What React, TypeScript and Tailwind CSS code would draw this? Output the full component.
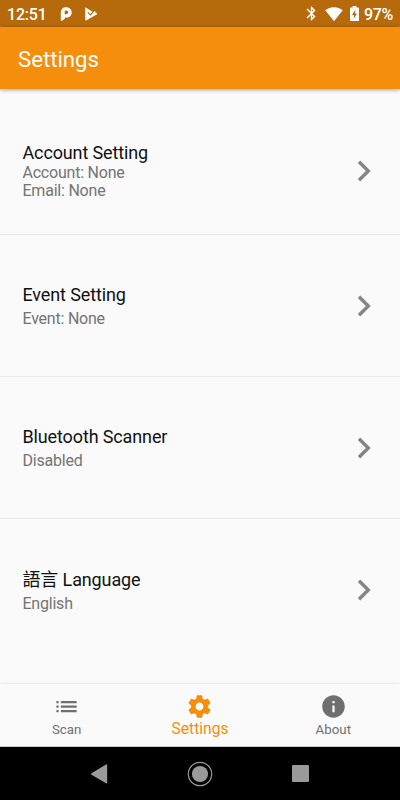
import React from 'react';

type IconProps = { d: string; className: string };

function Icon({ d, className }: IconProps) {
  return (
    <svg viewBox="0 0 24 24" fill="currentColor" className={className} aria-hidden="true">
      <path d={d} />
    </svg>
  );
}

const paths = {
  bluetooth:
    'M17.71 7.71L12 2h-1v7.59L6.41 5 5 6.41 10.59 12 5 17.59 6.41 19 11 14.41V22h1l5.71-5.71-4.3-4.29 4.3-4.29zM13 5.83l1.88 1.88L13 9.59V5.83zm1.88 10.46L13 18.17v-3.76l1.88 1.88z',
  wifi: 'M12 21.5L23.6 7C23.2 6.6 18.7 3 12 3S.8 6.6.4 7L12 21.5z',
  list: 'M3 13h2v-2H3v2zm0 4h2v-2H3v2zm0-8h2V7H3v2zm4 4h14v-2H7v2zm0 4h14v-2H7v2zM7 7v2h14V7H7z',
  settings:
    'M19.43 12.98c.04-.32.07-.64.07-.98s-.03-.66-.07-.98l2.11-1.65c.19-.15.24-.42.12-.64l-2-3.46c-.12-.22-.39-.3-.61-.22l-2.49 1c-.52-.4-1.08-.73-1.69-.98l-.38-2.65C14.46 2.18 14.25 2 14 2h-4c-.25 0-.46.18-.49.42l-.38 2.65c-.61.25-1.17.59-1.69.98l-2.49-1c-.23-.09-.49 0-.61.22l-2 3.46c-.13.22-.07.49.12.64l2.11 1.65c-.04.32-.07.65-.07.98s.03.66.07.98l-2.11 1.65c-.19.15-.24.42-.12.64l2 3.46c.12.22.39.3.61.22l2.49-1c.52.4 1.08.73 1.69.98l.38 2.65c.03.24.24.42.49.42h4c.25 0 .46-.18.49-.42l.38-2.65c.61-.25 1.17-.59 1.69-.98l2.49 1c.23.09.49 0 .61-.22l2-3.46c.12-.22.07-.49-.12-.64l-2.11-1.65zM12 15.5c-1.93 0-3.5-1.57-3.5-3.5s1.57-3.5 3.5-3.5 3.5 1.57 3.5 3.5-1.57 3.5-3.5 3.5z',
  info: 'M12 2C6.48 2 2 6.48 2 12s4.48 10 10 10 10-4.48 10-10S17.52 2 12 2zm1 15h-2v-6h2v6zm0-8h-2V7h2v2z',
};

function StatusBar() {
  return (
    <div className="flex h-[27px] shrink-0 items-center bg-[#b66a0b] px-[7px] text-white">
      <span className="w-[40px] whitespace-nowrap pt-[2px] text-[16px] font-medium leading-none tracking-[-0.2px]">
        12:51
      </span>
      <svg viewBox="0 0 12 14" className="ml-[13px] h-[14px] w-3" aria-hidden="true">
        <path
          fill="white"
          fillRule="evenodd"
          d="M.8 5.6C.8 2.2 2.9.2 6.1.2S11.7 2.4 11.7 5.4 9.5 10.5 6.7 10.5H5.1C4.8 12.4 3.2 13.7.8 13.7zM6.3 3.4C5.3 3.4 4.7 4.1 4.7 5.1V7.3H6.1C7.4 7.3 8.2 6.5 8.2 5.3S7.4 3.4 6.3 3.4z"
        />
      </svg>
      <svg viewBox="0 0 14 14" className="ml-[12px] h-[14px] w-[14px]" aria-hidden="true">
        <path
          fill="white"
          d="M1.200.6Q1.200.2 1.700.5L7 3.700 9.200 4.900 10.800 3.100 11.400 5.600 13 6.300Q13.500 6.700 13 7.200L2.500 13.200Q1.200 13.800 1.200 12.400z"
        />
        <path d="M3.800 5.400 6.400 7.900 10.800 3.200" fill="none" stroke="#b66a0b" strokeWidth="1.1" />
      </svg>
      <Icon d={paths.bluetooth} className="ml-auto h-[17px] w-[17px]" />
      <Icon d={paths.wifi} className="ml-[5px] mt-px h-[18px] w-[18px]" />
      <svg viewBox="0 0 9 15" className="ml-[7px] mr-[5px] h-[15px] w-[9px]" aria-hidden="true">
        <path
          fill="white"
          fillRule="evenodd"
          d="M2.600 0H6.400V1.500H8.200Q9 1.500 9 2.300V14.200Q9 15 8.200 15H.8Q0 15 0 14.200V2.300Q0 1.500.8 1.500H2.600zM5.400 3.800 2 9H4L3.600 12.700 7 7.500H5z"
        />
      </svg>
      <span className="w-[29px] whitespace-nowrap pt-[2px] text-[16px] font-medium leading-none tracking-[-0.3px]">
        97%
      </span>
    </div>
  );
}

type RowProps = { title: string; lines: string[]; tall?: boolean; last?: boolean };

function SettingRow({ title, lines, tall, last }: RowProps) {
  return (
    <div
      className={`flex shrink-0 items-center justify-between pl-[22.5px] pr-[29px] ${
        tall ? 'h-[146px] pt-[18px]' : 'h-[142px]'
      } ${last ? '' : 'border-b border-[#e9e9e9]'}`}
    >
      <div className={tall ? '' : 'pt-[3px]'}>
        <div className="text-[18px] leading-[22px] tracking-[-0.13px] text-[#111]">{title}</div>
        <div className={tall ? '' : 'mt-[2px] pb-[1px]'}>
          {lines.map((line) => (
            <div
              key={line}
              className={`text-[16px] tracking-[-0.22px] text-[#747474] ${
                tall ? 'leading-[17.5px]' : 'leading-[21px]'
              }`}
            >
              {line}
            </div>
          ))}
        </div>
      </div>
      <svg viewBox="0 0 14 22" className="h-[22px] w-[14px] text-[#858585]" aria-hidden="true">
        <path d="M2 1.7 11.3 11 2 20.3" fill="none" stroke="currentColor" strokeWidth="3.4" />
      </svg>
    </div>
  );
}

export default function App() {
  return (
    <div className="flex h-[800px] w-[400px] flex-col overflow-hidden bg-[#fafafa] font-['Roboto','Noto_Sans_CJK_TC',sans-serif]">
      <StatusBar />
      <header className="z-10 flex h-[62px] shrink-0 items-center bg-[#f58e0c] pl-[18px] pt-[2px] text-[22.2px] leading-none text-white shadow-[0_1px_4px_rgba(0,0,0,0.35)]">
        <h1>Settings</h1>
      </header>
      <main className="flex flex-1 flex-col">
        <SettingRow title="Account Setting" lines={['Account: None', 'Email: None']} tall />
        <SettingRow title="Event Setting" lines={['Event: None']} />
        <SettingRow title="Bluetooth Scanner" lines={['Disabled']} />
        <SettingRow title="語言 Language" lines={['English']} last />
      </main>
      <nav className="grid h-[63px] shrink-0 grid-cols-3 border-b border-[#c8c8c8] bg-[#fafafa] text-[#6f6f6f] shadow-[0_-1px_2px_rgba(0,0,0,0.07)]">
        <div className="flex flex-col items-center pt-[9px]">
          <Icon d={paths.list} className="h-[27px] w-[27px]" />
          <span className="mt-[1px] text-[13.3px] leading-[17px]">Scan</span>
        </div>
        <div className="flex flex-col items-center pt-[9px] text-[#f58e0c]">
          <Icon d={paths.settings} className="h-[27px] w-[27px]" />
          <span className="text-[15.6px] leading-[18px]">Settings</span>
        </div>
        <div className="flex flex-col items-center pt-[9px]">
          <Icon d={paths.info} className="h-[27px] w-[27px]" />
          <span className="mt-[1px] text-[13.3px] leading-[17px]">About</span>
        </div>
      </nav>
      <div className="flex h-[53px] shrink-0 items-center justify-center gap-[75px] bg-black text-[#9a9a9a]">
        <svg viewBox="0 0 24 24" className="h-6 w-6" fill="currentColor" aria-hidden="true">
          <path d="M3.5 11.3 18 2.6Q19.2 2.1 19.2 3.4V20.6Q19.2 21.9 18 21.3L3.5 12.7Q2.5 12 3.5 11.3z" />
        </svg>
        <svg viewBox="0 0 26 26" className="h-[26px] w-[26px]" aria-hidden="true">
          <circle cx="13" cy="13" r="11.7" fill="none" stroke="currentColor" strokeWidth="1.2" />
          <circle cx="13" cy="13" r="8.1" fill="currentColor" />
        </svg>
        <div className="flex h-6 w-6 items-center justify-center">
          <div className="h-[17px] w-[17px] rounded-[1px] bg-[#9a9a9a]" />
        </div>
      </div>
    </div>
  );
}
